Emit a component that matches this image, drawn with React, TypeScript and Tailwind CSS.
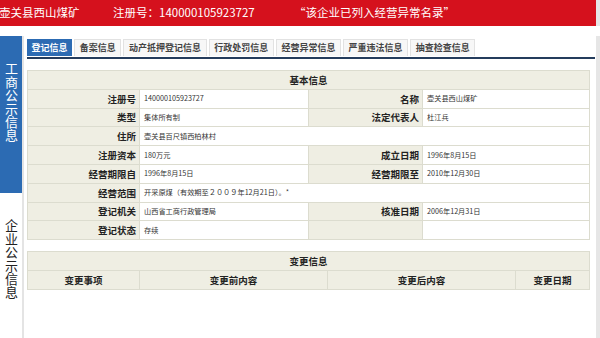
import React from "react";

const cjk = { fontFamily: '"Noto Sans CJK SC", "Liberation Sans", sans-serif' };

const tabs = ["登记信息", "备案信息", "动产抵押登记信息", "行政处罚信息", "经营异常信息", "严重违法信息", "抽查检查信息"];

const L = "bg-[#efeee3] border border-[#dcdccf] text-right pr-[3px] font-bold text-[9.5px] text-[#222]";
const V = "bg-white border border-[#dcdccf] pl-[4px] text-[7.2px] text-[#333]";

export default function App() {
  return (
    <div className="w-[600px] h-[338px] overflow-hidden bg-white relative" style={cjk}>
      <div className="flex">
        <div className="w-[596px] h-[26px] bg-[#d5111d] text-white text-[11.5px] flex items-center">
          <span className="ml-[-1px] w-[114px]">壶关县西山煤矿</span>
          <span className="w-[181px]">注册号：140000105923727</span>
          <span>“该企业已列入经营异常名录”</span>
        </div>
        <div className="w-[4px] h-[26px] bg-[#e6e6e6]" />
      </div>
      <div className="flex pt-[10px]">
        <div className="w-[24px] flex flex-col border-r-2 border-[#e4e4e4] h-[302px]">
          <div className="h-[157px] bg-[#2c6bb3] text-white text-[13px] flex items-start justify-center pt-[26px]">
            <div className="[writing-mode:vertical-rl] [text-orientation:upright] tracking-[0.4px] leading-[22px]">工商公示信息</div>
          </div>
          <div className="flex-1 text-[#222] text-[13px] flex justify-center pt-[26px]">
            <div className="[writing-mode:vertical-rl] [text-orientation:upright] tracking-[0.4px] leading-[22px] h-[82px]">企业公示信息</div>
          </div>
        </div>
        <div className="flex-1 pl-[3px]">
          <div className="flex gap-[2px] pt-[3px]">
            {tabs.map((t, i) => (
              <div
                key={t}
                className={
                  i === 0
                    ? "h-[17px] px-[4.6px] bg-[#2c6bb3] text-white font-bold text-[9px] flex items-center"
                    : "h-[17px] px-[4.6px] bg-[#f7f7f7] border border-b-0 border-[#e2e2e2] text-[#444] font-bold text-[9px] flex items-center"
                }
              >
                {t}
              </div>
            ))}
          </div>
          <div className="mt-[1px] h-[2px] w-[568px] bg-[#243c5c]" />
          <table className="mt-[11px] w-[562px] table-fixed border-collapse">
            <colgroup>
              <col className="w-[112px]" />
              <col className="w-[169px]" />
              <col className="w-[114px]" />
              <col className="w-[167px]" />
            </colgroup>
            <tbody>
              <tr className="h-[18.8px]">
                <td colSpan={4} className="bg-[#efeee3] border border-[#dcdccf] text-center font-bold text-[9.5px] text-[#222]">基本信息</td>
              </tr>
              <tr className="h-[18.8px]">
                <td className={L}>注册号</td>
                <td className={V}>140000105923727</td>
                <td className={L}>名称</td>
                <td className={V}>壶关县西山煤矿</td>
              </tr>
              <tr className="h-[18.8px]">
                <td className={L}>类型</td>
                <td className={V}>集体所有制</td>
                <td className={L}>法定代表人</td>
                <td className={V}>杜江兵</td>
              </tr>
              <tr className="h-[18.8px]">
                <td className={L}>住所</td>
                <td colSpan={3} className={V}>壶关县百尺镇西柏林村</td>
              </tr>
              <tr className="h-[18.8px]">
                <td className={L}>注册资本</td>
                <td className={V}>180万元</td>
                <td className={L}>成立日期</td>
                <td className={V}>1996年8月15日</td>
              </tr>
              <tr className="h-[18.8px]">
                <td className={L}>经营期限自</td>
                <td className={V}>1996年8月15日</td>
                <td className={L}>经营期限至</td>
                <td className={V}>2010年12月30日</td>
              </tr>
              <tr className="h-[18.8px]">
                <td className={L}>经营范围</td>
                <td colSpan={3} className={V}>开采原煤（有效期至２００９年12月21日）。*</td>
              </tr>
              <tr className="h-[18.8px]">
                <td className={L}>登记机关</td>
                <td className={V}>山西省工商行政管理局</td>
                <td className={L}>核准日期</td>
                <td className={V}>2006年12月31日</td>
              </tr>
              <tr className="h-[18.8px]">
                <td className={L}>登记状态</td>
                <td className={V}>存续</td>
                <td className={L}></td>
                <td className={V}></td>
              </tr>
            </tbody>
          </table>
          <table className="mt-[11px] w-[562px] table-fixed border-collapse">
            <colgroup>
              <col className="w-[112px]" />
              <col className="w-[188px]" />
              <col className="w-[188px]" />
              <col className="w-[74px]" />
            </colgroup>
            <tbody>
              <tr className="h-[19px]">
                <td colSpan={4} className="bg-[#efeee3] border border-[#dcdccf] text-center font-bold text-[9.5px] text-[#222]">变更信息</td>
              </tr>
              <tr className="h-[19px]">
                {["变更事项", "变更前内容", "变更后内容", "变更日期"].map((h) => (
                  <td key={h} className="bg-[#efeee3] border border-[#dcdccf] text-center font-bold text-[9.5px] text-[#222]">{h}</td>
                ))}
              </tr>
            </tbody>
          </table>
        </div>
        <div className="w-[4px] h-[302px] bg-[#e6e6e6]" />
      </div>
    </div>
  );
}
